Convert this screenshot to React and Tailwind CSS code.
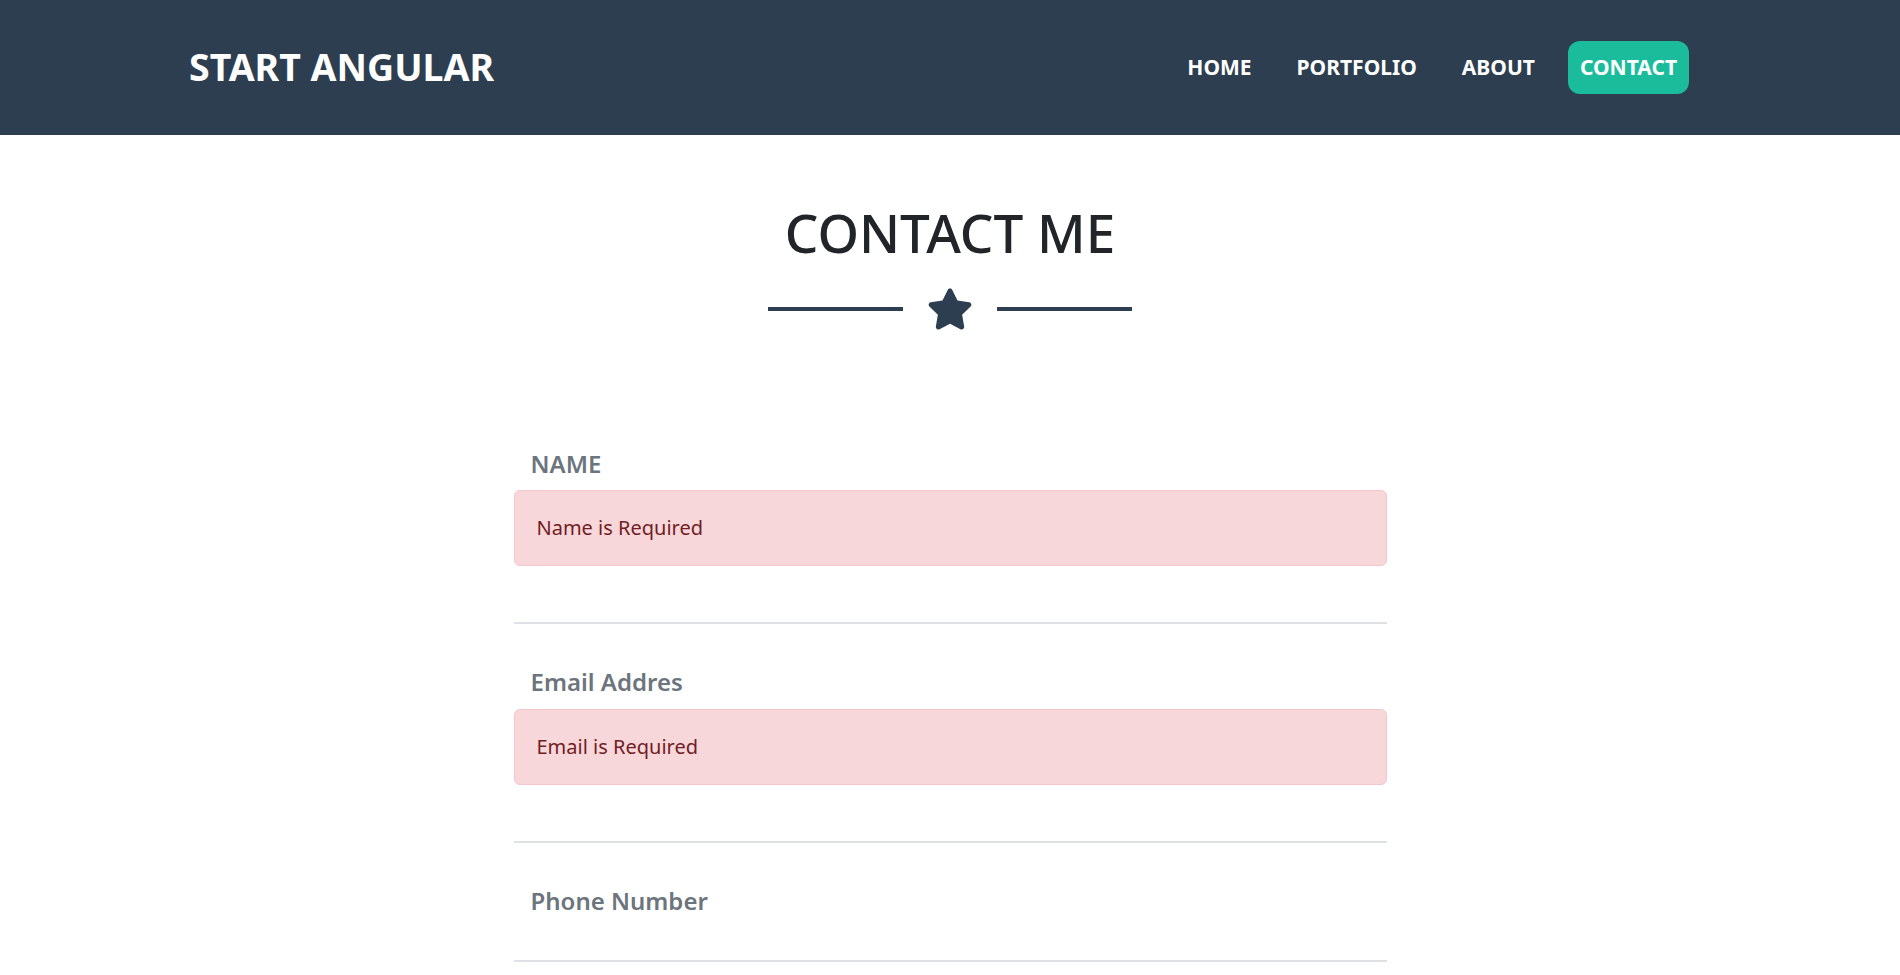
import React from "react";

const font = { fontFamily: '"Noto Sans", "Open Sans", sans-serif' };

const Star = () => (
  <svg viewBox="0 0 576 512" className="w-[46px] h-[42px]" fill="#2c3e50">
    <path d="M259.3 17.8L194 150.2 47.9 171.5c-26.2 3.8-36.7 36.1-17.7 54.6l105.7 103-25 145.5c-4.5 26.3 23.2 46 46.4 33.7L288 439.6l130.7 68.7c23.2 12.2 50.9-7.4 46.4-33.7l-25-145.5 105.7-103c19-18.5 8.5-50.8-17.7-54.6L382 150.2 316.7 17.8c-11.7-23.6-45.6-23.9-57.4 0z" />
  </svg>
);

const Field = ({ label, error }) => (
  <div
    className={`border-b-2 border-[#dee2e6] pt-[44px] ${
      error ? "pb-[56px]" : "pb-[44px]"
    }`}
  >
    <label className="block pl-[17px] text-[24px] leading-[1.2] font-semibold text-[#6c757d]">
      {label}
    </label>
    {error && (
      <div className="mt-[12px] h-[76px] flex items-center px-[22px] bg-[#f8d7da] border border-[#f5c6cb] rounded-[6px] text-[#721c24] text-[20px]">
        {error}
      </div>
    )}
  </div>
);

export default function App() {
  const links = ["HOME", "PORTFOLIO", "ABOUT"];

  return (
    <div className="min-h-screen bg-white" style={font}>
      {/* Navbar */}
      <nav className="h-[135px] bg-[#2c3e50] flex items-center justify-between pl-[189px] pr-[211px]">
        <a className="text-white text-[37.5px] font-bold">START ANGULAR</a>
        <ul className="flex items-center gap-[21px]">
          {links.map((link) => (
            <li key={link}>
              <a className="px-[12px] text-white text-[21px] font-bold">
                {link}
              </a>
            </li>
          ))}
          <li>
            <a className="block px-[12px] py-[11px] rounded-[12px] bg-[#1abc9c] text-white text-[21px] font-bold">
              CONTACT
            </a>
          </li>
        </ul>
      </nav>

      {/* Heading */}
      <section className="pt-[66px]">
        <h2 className="text-center text-[53px] leading-[1.2] font-medium text-[#212529]">
          CONTACT ME
        </h2>
        <div className="flex items-center justify-center gap-[24px] mt-[23px]">
          <div className="w-[135px] h-[4px] bg-[#2c3e50]" />
          <Star />
          <div className="w-[135px] h-[4px] bg-[#2c3e50]" />
        </div>
      </section>

      {/* Form */}
      <form className="w-[873px] mx-auto mt-[76px]">
        <Field label="NAME" error="Name is Required" />
        <Field label="Email Addres" error="Email is Required" />
        <Field label="Phone Number" />
      </form>
    </div>
  );
}
